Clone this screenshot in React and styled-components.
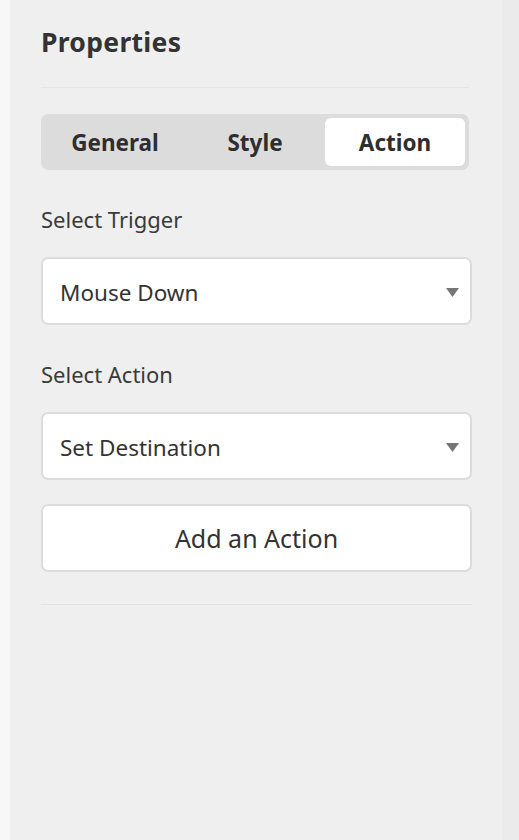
import styled, { createGlobalStyle } from "styled-components";

const GlobalStyle = createGlobalStyle`
  html, body {
    margin: 0;
    padding: 0;
    background: #efefef;
  }
  * {
    box-sizing: border-box;
  }
`;

const tabs = ["General", "Style", "Action"];

function Arrow() {
  return (
    <svg width="13" height="9" viewBox="0 0 13 9">
      <path d="M0 0 L13 0 L6.5 9 Z" fill="#767676" />
    </svg>
  );
}

export default function App() {
  return (
    <Page>
      <GlobalStyle />
      <Edge />
      <Panel>
        <Title>Properties</Title>
        <Divider $inset $gap={25} />
        <TabBar>
          {tabs.map((t) => (
            <Tab key={t} $active={t === "Action"}>
              {t}
            </Tab>
          ))}
        </TabBar>
        <Label>Select Trigger</Label>
        <Select>
          <span>Mouse Down</span>
          <Arrow />
        </Select>
        <Label>Select Action</Label>
        <Select>
          <span>Set Destination</span>
          <Arrow />
        </Select>
        <AddButton>Add an Action</AddButton>
        <Divider $gap={32} />
      </Panel>
      <Gutter />
    </Page>
  );
}

const Page = styled.div`
  display: flex;
  height: 840px;
  font-family: "Noto Sans", "Open Sans", sans-serif;
  color: #333;
`;
const Edge = styled.div`
  width: 10px;
  background: #f7f7f7;
`;
const Gutter = styled.div`
  width: 17px;
  background: #ebebeb;
`;
const Panel = styled.div`
  flex: 1;
  display: flex;
  flex-direction: column;
  padding: 22px 30px 0 31px;
`;
const Title = styled.div`
  font-size: 26.5px;
  font-weight: 700;
  line-height: 40px;
  color: #333;
  letter-spacing: 0.3px;
`;
const Divider = styled.div`
  height: 1px;
  background: #e4e4e4;
  margin-top: ${(p) => p.$gap}px;
  margin-right: ${(p) => (p.$inset ? "3px" : "0")};
`;
const TabBar = styled.div`
  display: grid;
  grid-template-columns: repeat(3, 1fr);
  margin: 26px 3px 0 0;
  padding: 4px;
  border-radius: 7px;
  background: #dcdcdc;
`;
const Tab = styled.div`
  height: 48px;
  display: flex;
  align-items: center;
  justify-content: center;
  border-radius: 6px;
  font-size: 22.5px;
  font-weight: 700;
  color: #2e2e2e;
  background: ${(p) => (p.$active ? "#fff" : "transparent")};
`;
const Label = styled.div`
  margin-top: 33px;
  font-size: 22px;
  line-height: 32px;
  color: #3a3a3a;
`;
const Select = styled.div`
  margin-top: 22px;
  height: 68px;
  flex-shrink: 0;
  display: flex;
  align-items: center;
  justify-content: space-between;
  padding: 2px 11px 0 17px;
  background: #fff;
  border: 2px solid #dcdcdc;
  border-radius: 7px;
  font-size: 22.5px;
  color: #333;
`;
const AddButton = styled.div`
  margin-top: 24px;
  height: 68px;
  flex-shrink: 0;
  display: flex;
  align-items: center;
  justify-content: center;
  background: #fff;
  border: 2px solid #dcdcdc;
  border-radius: 7px;
  font-size: 25px;
  color: #333;
`;
